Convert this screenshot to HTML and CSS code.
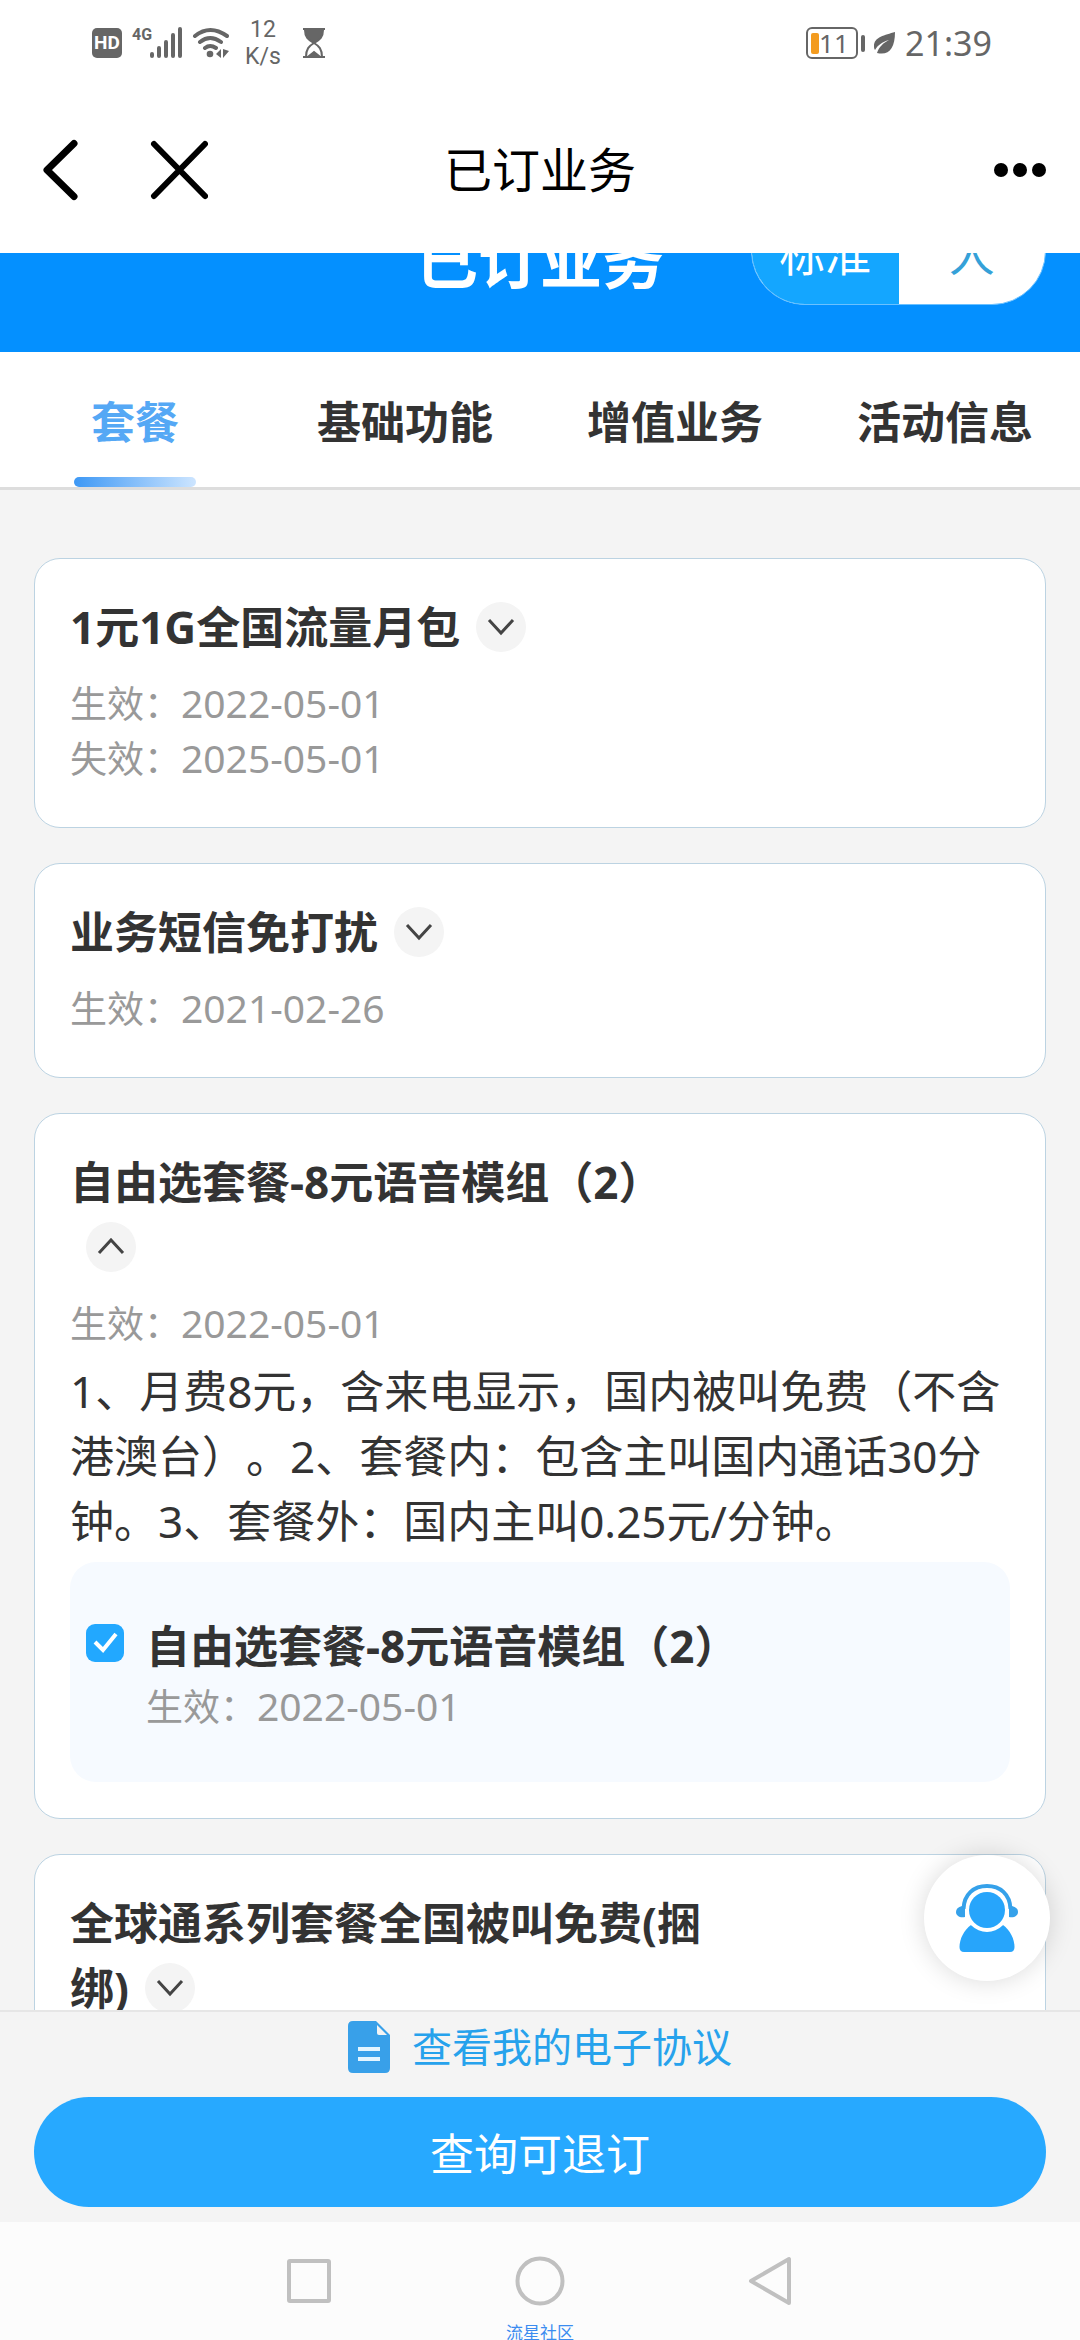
FILE: index.html
```html
<!DOCTYPE html>
<html lang="zh-CN">
<head>
<meta charset="utf-8">
<meta name="viewport" content="width=device-width, initial-scale=1">
<title>已订业务</title>
<link rel="stylesheet" href="styles.css">
</head>
<body>
<div class="screen">
  <div class="status-bar">
    <div class="status-left">
      <span class="hd-badge">HD</span>
      <div class="signal">
        <span class="signal-type">4G</span>
        <svg width="32" height="32" viewBox="0 0 32 32" fill="none" stroke="#666" stroke-width="4" stroke-linecap="round" aria-hidden="true"><path d="M2 27v2M9 21v8M16 15v14M23 8v21M30 2v27"/></svg>
      </div>
      <svg width="38" height="32" viewBox="0 0 38 32" fill="none" stroke="#666" stroke-width="4" stroke-linecap="round" aria-hidden="true"><path d="M3 9Q18 -3 35 9M8 15Q18 7 29 15M13 21Q18 17 24 21"/><circle cx="18" cy="27" r="3.3" fill="#666" stroke="none"/><path d="M24 27l5-5v9zM31 22v9l6-7z" fill="#666" stroke="none"/></svg>
      <div class="net-speed"><span>12</span><span>K/s</span></div>
      <svg class="hourglass" width="24" height="32" viewBox="0 0 24 32" fill="none" stroke="#666" stroke-width="2" aria-hidden="true"><path d="M1 2h22M1 30h22"/><path d="M3 3h18c0 7-3 10-9 13C6 13 3 10 3 3z" fill="#666"/><path d="M4 30c0-8 3-11 8-14 5 3 8 6 8 14"/><path d="M7 29l5-4 5 4z" fill="#666"/></svg>
    </div>
    <div class="status-right">
      <div class="battery"><span class="battery-body"><i class="battery-level"></i>11</span><i class="battery-cap"></i></div>
      <svg width="22" height="24" viewBox="0 0 22 24" aria-hidden="true"><path d="M21 1C11 4 0 6 0 15c0 1 0 3 1 4C4 14 8 11 15 9 9 12 5 16 3 22c12 3 18-5 18-21z" fill="#666"/></svg>
      <time>21:39</time>
    </div>
  </div>

  <header class="title-bar">
    <div class="title-actions">
      <button type="button" aria-label="返回"><svg width="44" height="62" viewBox="-8 0 44 62" fill="none" stroke="#000" stroke-width="7" stroke-linecap="round" stroke-linejoin="round"><path d="M32 4.500L5 31l27 26.500"/></svg></button>
      <button type="button" aria-label="关闭"><svg width="58" height="62" viewBox="0 0 58 62" fill="none" stroke="#000" stroke-width="6" stroke-linecap="round"><path d="M4 5l51 52M55 5L4 57"/></svg></button>
    </div>
    <h1>已订业务</h1>
    <button type="button" class="more" aria-label="更多"><svg width="54" height="16" viewBox="0 0 54 16"><circle cx="9" cy="8" r="7"/><circle cx="28" cy="8" r="7"/><circle cx="47" cy="8" r="7"/></svg></button>
  </header>

  <main class="content">
    <div class="banner">
      <strong class="banner-title">已订业务</strong>
      <div class="mode-switch">
        <button type="button" class="mode mode-active">标准</button>
        <button type="button" class="mode">人</button>
      </div>
    </div>

    <nav class="tabs">
      <a href="#package" class="tab tab-active">套餐</a>
      <a href="#basic" class="tab">基础功能</a>
      <a href="#value" class="tab">增值业务</a>
      <a href="#activity" class="tab">活动信息</a>
    </nav>

    <div class="cards">
      <article class="card">
        <h2 class="card-title">1元1G全国流量月包<button type="button" class="toggle" aria-label="展开"><svg width="28" height="18" viewBox="0 0 28 18"><path d="M2 2l12 13L26 2"/></svg></button></h2>
        <div class="meta">
          <p>生效：<time>2022-05-01</time></p>
          <p>失效：<time>2025-05-01</time></p>
        </div>
      </article>

      <article class="card">
        <h2 class="card-title">业务短信免打扰<button type="button" class="toggle" aria-label="展开"><svg width="28" height="18" viewBox="0 0 28 18"><path d="M2 2l12 13L26 2"/></svg></button></h2>
        <div class="meta">
          <p>生效：<time>2021-02-26</time></p>
        </div>
      </article>

      <article class="card">
        <h2 class="card-title">自由选套餐-8元语音模组（2）<button type="button" class="toggle" aria-label="收起"><svg width="28" height="18" viewBox="0 0 28 18"><path d="M2 15L14 2l12 13"/></svg></button></h2>
        <div class="meta">
          <p>生效：<time>2022-05-01</time></p>
        </div>
        <p class="description">1、月费8元，含来电显示，国内被叫免费（不含港澳台）。2、套餐内：包含主叫国内通话30分钟。3、套餐外：国内主叫0.25元/分钟。</p>
        <div class="option">
          <span class="check">
            <input type="checkbox" id="voice-module" checked>
            <svg width="38" height="38" viewBox="0 0 38 38" aria-hidden="true"><path d="M9 18l8 8 13-16"/></svg>
          </span>
          <div>
            <label class="option-title" for="voice-module">自由选套餐-8元语音模组（2）</label>
            <div class="meta">
              <p>生效：<time>2022-05-01</time></p>
            </div>
          </div>
        </div>
      </article>

      <article class="card">
        <h2 class="card-title">全球通系列套餐全国被叫免费(捆绑)<button type="button" class="toggle" aria-label="展开"><svg width="28" height="18" viewBox="0 0 28 18"><path d="M2 2l12 13L26 2"/></svg></button></h2>
      </article>
    </div>

    <button type="button" class="service" aria-label="客服"><svg width="62" height="70" viewBox="0 0 62 70"><path d="M15 42C8 47 3.500 56 3.500 64Q3.500 69 8 69H54Q58.500 69 58.500 64C58.500 56 54 47 47 42z" fill="#27a5fb"/><circle cx="31" cy="27" r="22" fill="#fff"/><circle cx="31" cy="27" r="18" fill="#27a5fb"/><path d="M7.500 26C8 11 18 3 31 3s23 8 23.500 23" fill="none" stroke="#35a1ea" stroke-width="4"/><path d="M6 23h3v11C4 35 0 33 0 29c0-3 2-5 6-6zM56 23h-3v11c5 1 9-1 9-5 0-3-2-5-6-6z" fill="#35a1ea"/></svg></button>
  </main>

  <footer class="actions">
    <a href="#agreement" class="agreement"><svg width="42" height="52" viewBox="0 0 42 52" aria-hidden="true"><path d="M5 0h23l14 14v33q0 5-5 5H5q-5 0-5-5V5q0-5 5-5z" fill="#38a0e9"/><path d="M29 4v8q0 2 2 2h8z" fill="#f4f4f4"/><path d="M10 28h22M10 38h22" stroke="#e4f5ff" stroke-width="4"/></svg><span>查看我的电子协议</span></a>
    <button type="button" class="primary">查询可退订</button>
  </footer>

  <nav class="system-nav">
    <div class="system-keys">
      <button type="button" aria-label="最近任务"><svg width="52" height="52" viewBox="0 0 52 52"><rect x="6" y="6" width="40" height="40" rx="1"/></svg></button>
      <button type="button" aria-label="主页"><svg width="52" height="52" viewBox="0 0 52 52"><circle cx="26" cy="26" r="22.500"/></svg></button>
      <button type="button" aria-label="返回"><svg width="52" height="52" viewBox="0 0 52 52"><path d="M44 4v44L6 26z"/></svg></button>
    </div>
    <span class="watermark">流星社区</span>
  </nav>
</div>
</body>
</html>
```
FILE: styles.css
```css
* {
  box-sizing: border-box;
}

body {
  margin: 0;
  font-family: "Noto Sans", "Noto Sans CJK SC", sans-serif;
  text-spacing-trim: space-all;
  color: #333;
  background: #f4f4f4;
}

h1, h2, p {
  margin: 0;
}

button {
  padding: 0;
  border: 0;
  background: none;
  font: inherit;
  color: inherit;
}

a {
  color: inherit;
  text-decoration: none;
}

svg {
  display: block;
}

.screen {
  display: flex;
  flex-direction: column;
  height: 100vh;
  overflow: hidden;
}

/* Status bar */
.status-bar {
  display: flex;
  justify-content: space-between;
  align-items: center;
  height: 86px;
  padding: 0 88px 0 92px;
  background: #fff;
  color: #666;
  font-family: Roboto, sans-serif;
}

.status-left,
.status-right {
  display: flex;
  align-items: center;
}

.status-left {
  gap: 10px;
}

.status-right {
  gap: 9px;
  font-family: "Noto Sans", sans-serif;
  font-size: 34px;
}

.hd-badge {
  width: 30px;
  border-radius: 5px;
  background: #666;
  color: #fff;
  font-size: 19px;
  font-weight: 700;
  line-height: 30px;
  text-align: center;
}

.signal {
  display: flex;
  align-items: flex-start;
}

.signal-type {
  width: 18px;
  font-size: 16px;
  font-weight: 700;
  line-height: 16px;
}

.net-speed {
  display: flex;
  flex-direction: column;
  align-items: center;
  width: 46px;
  font-size: 23px;
  line-height: 27px;
}

.hourglass {
  margin-left: 6px;
}

.battery {
  display: flex;
  align-items: center;
  gap: 3px;
}

.battery-body {
  display: flex;
  align-items: center;
  width: 52px;
  height: 32px;
  padding-left: 3px;
  border: 2px solid #666;
  border-radius: 6px;
  font-size: 26px;
  line-height: 26px;
}

.battery-level {
  width: 8px;
  height: 21px;
  border-radius: 2px;
  background: #f39b1f;
}

.battery-cap {
  width: 4px;
  height: 17px;
  border-radius: 2px;
  background: #666;
}

/* Title bar */
.title-bar {
  display: grid;
  grid-template-columns: 1fr auto 1fr;
  align-items: center;
  height: 167px;
  padding: 0 34px;
  background: #fff;
  color: #000;
}

.title-actions {
  display: flex;
  gap: 72px;
}

.title-bar h1 {
  font-size: 48px;
  font-weight: 400;
  line-height: 64px;
}

.more {
  justify-self: end;
}

/* Scrolled page */
.content {
  position: relative;
  flex: 1;
  min-height: 0;
  overflow: hidden;
}

.banner {
  display: grid;
  grid-template-columns: 1fr auto 1fr;
  grid-template-rows: 100%;
  align-items: end;
  height: 99px;
  padding: 0 34px 47px;
  overflow: hidden;
  background: #0490ff;
  color: #fff;
}

.banner-title {
  grid-column: 2;
  font-size: 62px;
  line-height: 90px;
}

.mode-switch {
  display: flex;
  justify-self: end;
  width: 295px;
  height: 108px;
  border: 1px solid #6bc1ff;
  border-radius: 54px;
  overflow: hidden;
  background: #fff;
}

.mode {
  flex: 1;
  color: #35a1d8;
  font-size: 46px;
}

.mode-active {
  background: #14a6ff;
  color: #fff;
}

.tabs {
  display: grid;
  grid-template-columns: repeat(4, 1fr);
  border-bottom: 3px solid #ddd;
  background: #fff;
}

.tab {
  display: flex;
  flex-direction: column;
  align-items: center;
  height: 135px;
  padding-top: 38px;
  font-size: 44px;
  font-weight: 700;
  line-height: 65px;
}

.tab-active {
  color: #55a8f5;
}

.tab-active::after {
  content: "";
  width: 122px;
  height: 10px;
  margin-top: auto;
  border-radius: 5px;
  background: linear-gradient(90deg, #3d98f5, #cde5ff);
}

.cards {
  display: flex;
  flex-direction: column;
  gap: 35px;
  padding: 68px 34px;
}

.card {
  padding: 36px 35px;
  border: 1px solid #bcd3e2;
  border-radius: 26px;
  background: #fff;
}

.card-title {
  max-width: 69%;
  font-size: 44px;
  font-weight: 700;
  line-height: 65px;
}

.toggle {
  display: inline-grid;
  place-items: center;
  width: 50px;
  height: 50px;
  margin: 7px 0 8px 16px;
  border-radius: 50%;
  background: #f4f4f4;
  vertical-align: top;
}

.toggle svg {
  fill: none;
  stroke: #444;
  stroke-width: 3;
}

.meta {
  padding-bottom: 5px;
  color: #999;
  font-size: 37px;
  line-height: 55px;
}

.meta time {
  font-size: 39px;
  line-height: 39px;
}

.card-title + .meta {
  margin-top: 16px;
}

.description {
  margin-top: 3px;
  font-size: 44px;
  line-height: 65px;
}

.option {
  display: flex;
  gap: 22px;
  margin-top: 8px;
  padding: 52px 16px 43px;
  border-radius: 26px;
  background: #f6faff;
}

.check {
  display: grid;
  align-self: flex-start;
  margin-top: 10px;
}

.check input,
.check svg {
  grid-area: 1 / 1;
}

.check input {
  width: 38px;
  height: 38px;
  margin: 0;
  border-radius: 9px;
  appearance: none;
  background: #22a8ff;
}

.check svg {
  fill: none;
  stroke: #fff;
  stroke-width: 4;
  pointer-events: none;
}

.option-title {
  display: block;
  font-size: 44px;
  font-weight: 700;
  line-height: 65px;
}

/* Floating customer service button */
.service {
  position: absolute;
  right: 30px;
  bottom: 29px;
  display: grid;
  place-items: center;
  width: 126px;
  height: 126px;
  border-radius: 50%;
  background: #fff;
  box-shadow: 0 0 26px rgba(0, 0, 0, 0.15);
}

/* Bottom actions */
.actions {
  display: flex;
  flex-direction: column;
  padding: 9px 34px 15px;
  border-top: 2px solid #e6e6e6;
  background: #f4f4f4;
}

.agreement {
  display: flex;
  justify-content: center;
  align-items: center;
  gap: 22px;
  color: #26a2ec;
  font-size: 40px;
  line-height: 52px;
}

.primary {
  height: 110px;
  margin-top: 24px;
  border-radius: 55px;
  background: #27a9ff;
  color: #fff;
  font-size: 44px;
}

/* System navigation */
.system-nav {
  display: flex;
  flex-direction: column;
  align-items: center;
  height: 118px;
  padding-top: 33px;
  overflow: hidden;
  background: #fcfcfc;
}

.system-keys {
  display: flex;
  gap: 179px;
}

.system-keys svg {
  fill: none;
  stroke: #c0c0c0;
  stroke-width: 4;
  stroke-linejoin: round;
}

.watermark {
  margin-top: 16px;
  color: #3b8cf0;
  font-size: 17px;
  line-height: 20px;
}
```
